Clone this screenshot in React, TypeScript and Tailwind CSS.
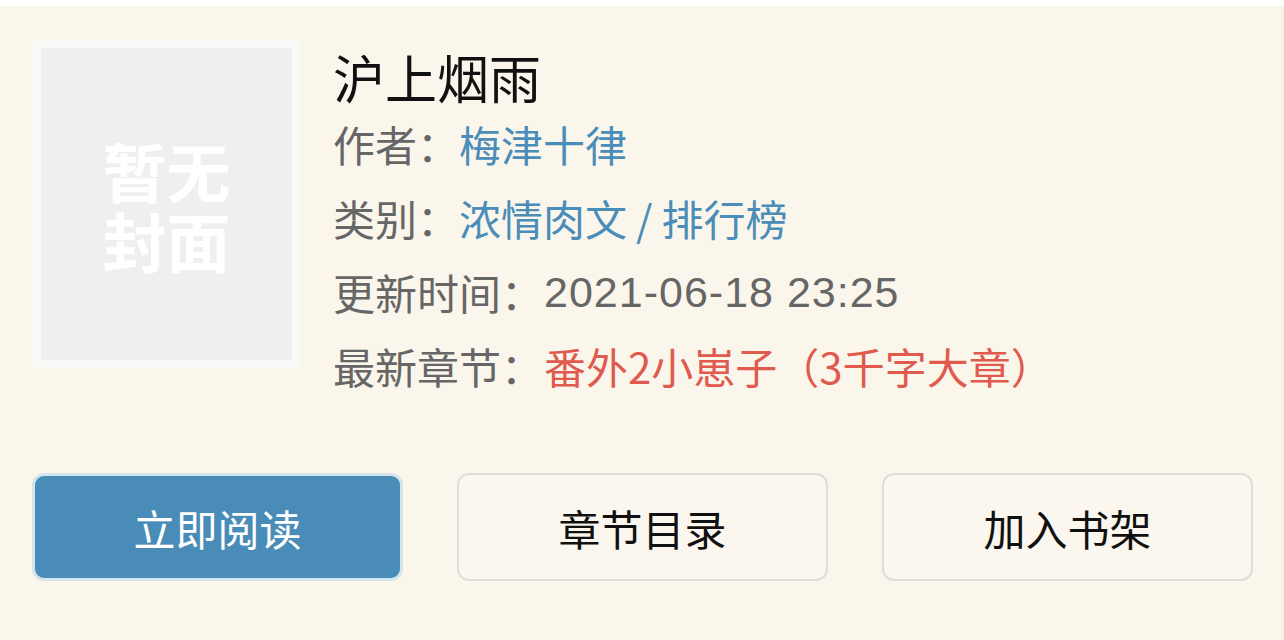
import React from 'react';

interface BookInfo {
  title: string;
  author: string;
  category: string;
  board: string;
  updatedAt: string;
  latestChapter: string;
}

const book: BookInfo = {
  title: '沪上烟雨',
  author: '梅津十律',
  category: '浓情肉文',
  board: '排行榜',
  updatedAt: '2021-06-18 23:25',
  latestChapter: '番外2小崽子（3千字大章）',
};

const font = { fontFamily: '"Noto Sans CJK SC", "Noto Sans", sans-serif' };

// Placeholder shown when the book has no cover image
function EmptyCover() {
  return (
    <div className="w-[267px] h-[328px] shrink-0 bg-[#f9f9f7] p-[8px] rounded-[2px]">
      <div className="w-full h-full bg-[#efefef] flex items-center justify-center">
        <p className="w-[130px] text-center break-all text-white font-bold text-[64px] leading-[70px]">暂无封面</p>
      </div>
    </div>
  );
}

function InfoRow({ label, children }: { label: string; children: React.ReactNode }) {
  return (
    <div className="flex items-center h-[74px] text-[42px] leading-[74px] whitespace-nowrap">
      <span className="text-[#666666]">{label}：</span>
      {children}
    </div>
  );
}

export default function App() {
  return (
    <div className="w-[1284px] h-[640px] bg-white pt-[6px] overflow-hidden" style={font}>
      <div className="h-[634px] bg-[#fbf6ec] border-r-[3px] border-[#f7f1e4] flex flex-col">
        {/* Cover + details */}
        <div className="flex items-start pl-[33px] pt-[34px] gap-[33px]">
          <EmptyCover />
          <div className="flex flex-col pt-[7px]">
            <h1 className="text-[52px] leading-[60px] text-[#111111] font-normal">{book.title}</h1>
            <InfoRow label="作者">
              <span className="text-[#4a8db8]">{book.author}</span>
            </InfoRow>
            <InfoRow label="类别">
              <span className="text-[#4a8db8]">{book.category}</span>
              <span className="text-[#4a8db8] mx-[9px]">/</span>
              <span className="text-[#4a8db8]">{book.board}</span>
            </InfoRow>
            <InfoRow label="更新时间">
              <span className="text-[#666666] ml-[1px] text-[43px] tracking-[1px] font-['Liberation_Sans',sans-serif]">
                {book.updatedAt}
              </span>
            </InfoRow>
            <InfoRow label="最新章节">
              <span className="text-[#e05a4e] ml-[1px]">{book.latestChapter}</span>
            </InfoRow>
          </div>
        </div>

        {/* Actions */}
        <div className="grid grid-cols-3 gap-[54px] pl-[32px] pr-[28px] mt-[70px]">
          <button className="h-[108px] rounded-[12px] bg-[#4a8cb8] border-[3px] border-[#d5e5ee] text-white text-[42px]">
            立即阅读
          </button>
          <button className="h-[108px] rounded-[12px] bg-[#fbf7ef] border-[2px] border-[#e0ddd8] text-[#111111] text-[42px]">
            章节目录
          </button>
          <button className="h-[108px] rounded-[12px] bg-[#fbf7ef] border-[2px] border-[#e0ddd8] text-[#111111] text-[42px]">
            加入书架
          </button>
        </div>
      </div>
    </div>
  );
}
